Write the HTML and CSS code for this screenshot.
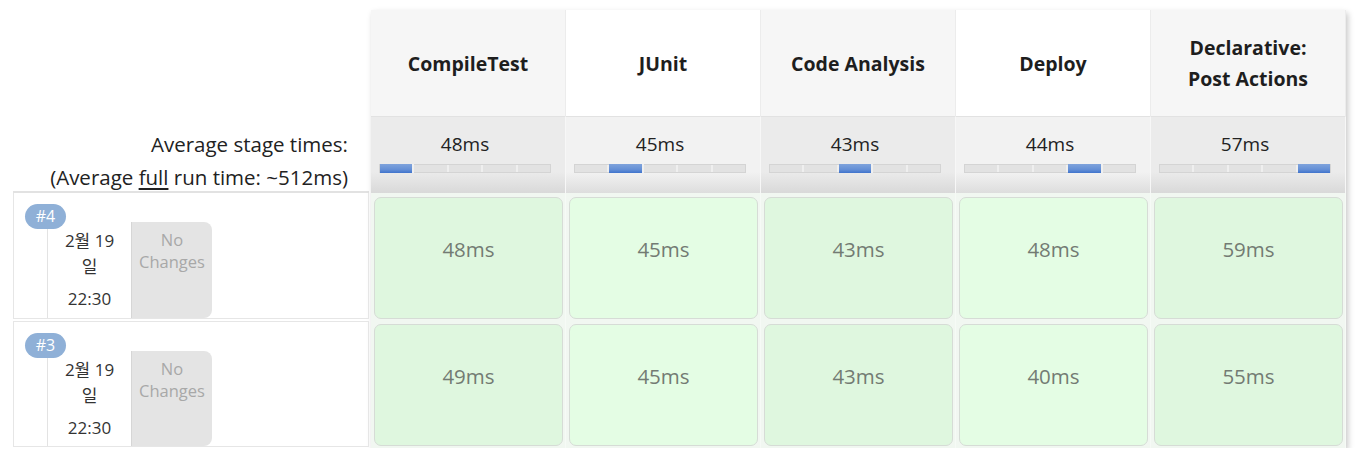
FILE: index.html
```html
<!DOCTYPE html>
<html lang="ko">
<head>
<meta charset="utf-8">
<title>Stage View</title>
<link rel="stylesheet" href="styles.css">
</head>
<body>
<div class="page">
  <div class="left">
    <div class="left-head"></div>
    <div class="avg-label">
      <div>Average stage times:</div>
      <div>(Average <u>full</u> run time: ~512ms)</div>
    </div>
    <div class="build">
      <span class="badge">#4</span>
      <div class="date">
        <div class="day">2월 19일</div>
        <div class="time">22:30</div>
      </div>
      <div class="changes">No Changes</div>
    </div>
    <div class="build">
      <span class="badge">#3</span>
      <div class="date">
        <div class="day">2월 19일</div>
        <div class="time">22:30</div>
      </div>
      <div class="changes">No Changes</div>
    </div>
  </div>
  <div class="table">
    <div class="head odd">CompileTest</div>
    <div class="head even">JUnit</div>
    <div class="head odd">Code Analysis</div>
    <div class="head even">Deploy</div>
    <div class="head odd">Declarative:<br>Post Actions</div>

    <div class="avg odd"><div class="avg-time">48ms</div><div class="bar"><span class="seg on"></span><span class="seg"></span><span class="seg"></span><span class="seg"></span><span class="seg"></span></div></div>
    <div class="avg even"><div class="avg-time">45ms</div><div class="bar"><span class="seg"></span><span class="seg on"></span><span class="seg"></span><span class="seg"></span><span class="seg"></span></div></div>
    <div class="avg odd"><div class="avg-time">43ms</div><div class="bar"><span class="seg"></span><span class="seg"></span><span class="seg on"></span><span class="seg"></span><span class="seg"></span></div></div>
    <div class="avg even"><div class="avg-time">44ms</div><div class="bar"><span class="seg"></span><span class="seg"></span><span class="seg"></span><span class="seg on"></span><span class="seg"></span></div></div>
    <div class="avg odd"><div class="avg-time">57ms</div><div class="bar"><span class="seg"></span><span class="seg"></span><span class="seg"></span><span class="seg"></span><span class="seg on"></span></div></div>

    <div class="cell row1"><div class="box odd">48ms</div></div>
    <div class="cell row1"><div class="box even">45ms</div></div>
    <div class="cell row1"><div class="box odd">43ms</div></div>
    <div class="cell row1"><div class="box even">48ms</div></div>
    <div class="cell row1"><div class="box odd">59ms</div></div>

    <div class="cell row2"><div class="box odd">49ms</div></div>
    <div class="cell row2"><div class="box even">45ms</div></div>
    <div class="cell row2"><div class="box odd">43ms</div></div>
    <div class="cell row2"><div class="box even">40ms</div></div>
    <div class="cell row2"><div class="box odd">55ms</div></div>
  </div>
</div>
</body>
</html>
```

FILE: styles.css
```css
* { box-sizing: border-box; }
html, body { margin: 0; padding: 0; background: #fff; }
body {
  font-family: "Open Sans", "Noto Sans CJK KR", sans-serif;
  color: #222;
}
.page {
  display: flex;
  gap: 2px;
  padding: 10px 0 0 13px;
}
.left {
  width: 356px;
  display: flex;
  flex-direction: column;
}
.left-head { height: 106px; }
.avg-label {
  height: 77px;
  text-align: right;
  padding: 12px 21px 0 0;
  font-size: 20.5px;
  line-height: 33px;
  color: #222;
  border-bottom: 2px solid #e2e2e2;
}
.avg-label u { text-underline-offset: 3px; text-decoration-thickness: 2px; }
.build {
  position: relative;
  height: 126px;
  border: 1px solid #e6e6e6;
  border-top: none;
  display: flex;
  padding: 29px 0 0 33px;
  margin-bottom: 1px;
}
.build + .build { border-top: 1px solid #e6e6e6; height: 126px; margin-top: 1px; }
.badge {
  position: absolute;
  left: 11px;
  top: 11px;
  width: 41px;
  height: 25px;
  border-radius: 13px;
  background: #8fb0d7;
  color: #fff;
  font-size: 16px;
  line-height: 25px;
  text-align: center;
  z-index: 1;
}
.date {
  width: 84px;
  background: #fff;
  border-left: 1px solid #e3e3e3;
  text-align: center;
  font-size: 17px;
  color: #333;
  padding: 6px 11px 0;
}
.day { line-height: 26px; }
.time { line-height: 26px; margin-top: 6px; }
.changes {
  width: 81px;
  background: #e4e4e4;
  border-radius: 0 8px 8px 0;
  border-left: 1px solid #d6d6d6;
  color: #a8a8a8;
  font-size: 16.5px;
  line-height: 22px;
  text-align: center;
  padding: 7px 4px 0;
}
.table {
  width: 975px;
  display: grid;
  grid-template-columns: repeat(5, 195px);
  grid-template-rows: 106px 77px 128px 127px;
  background: #f1f7f1;
  box-shadow: 2px 3px 6px rgba(0, 0, 0, 0.22);
}
.head {
  display: flex;
  align-items: center;
  justify-content: center;
  text-align: center;
  font-weight: 700;
  font-size: 19.5px;
  line-height: 31px;
  color: #1e1e1e;
  border-right: 1px solid #ececec;
}
.head.odd { background: #f6f6f6; }
.head.even { background: #ffffff; }
.avg {
  padding: 12px 14px 0 8px;
  text-align: center;
  border-right: 1px solid #f7f7f7;
  border-top: 1px solid #e2e2e2;
}
.avg.odd { background: linear-gradient(#ebebeb 0, #ebebeb 55px, #d8d8d8 77px); }
.avg.even { background: linear-gradient(#f2f2f2 0, #f2f2f2 55px, #dcdcdc 77px); }
.avg-time {
  font-size: 19px;
  line-height: 30px;
  color: #222;
}
.bar {
  display: flex;
  height: 9px;
  margin-top: 5px;
  background: #e2e2e2;
  border: 1px solid #d4d4d4;
}
.seg {
  flex: 1;
  border-right: 2px solid #efefef;
}
.seg:last-child { border-right: none; }
.seg.on {
  background: linear-gradient(#7fa3dc, #6590d6 60%, #3f73cc);
  margin: -1px 0;
}
.cell {
  padding: 4px 2px 2px 3px;
  border-right: 1px solid #f6faf6;
}
.row2 { padding-top: 3px; }
.box {
  height: 100%;
  border: 1px solid #d6dcd6;
  border-radius: 7px;
  text-align: center;
  font-size: 20.5px;
  color: #737b73;
  padding-top: 37px;
  line-height: 28px;
}
.box.odd { background: #dff7df; }
.box.even { background: #e4fde4; }
```
